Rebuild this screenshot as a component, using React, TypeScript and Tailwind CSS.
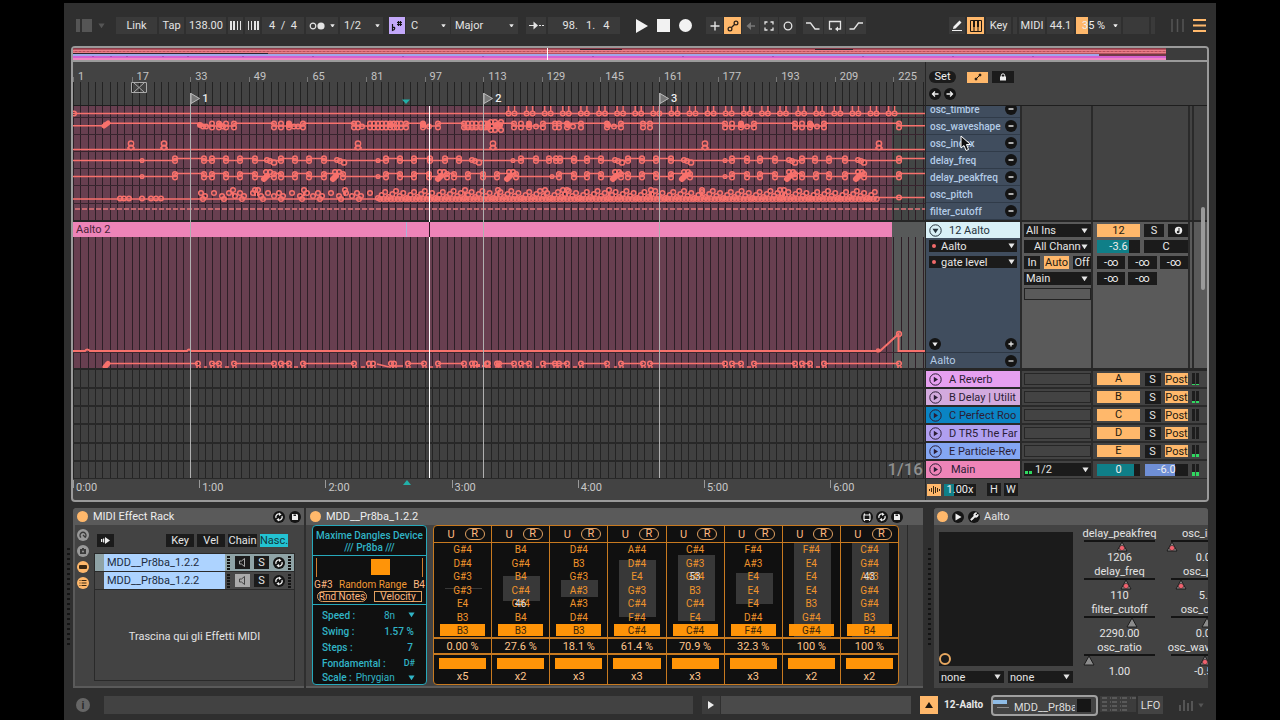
import type { ReactNode } from 'react'
import { Wrench } from 'lucide-react'

const BARS = 232.6
const CLIP_END = 819

const barLabels = [1, 17, 33, 49, 65, 81, 97, 113, 129, 145, 161, 177, 193, 209, 225]
const minutes = ['0:00', '1:00', '2:00', '3:00', '4:00', '5:00', '6:00']
const locators = [
  { bar: 33, name: '1' },
  { bar: 113, name: '2' },
  { bar: 161, name: '3' },
]
const params = ['osc_timbre', 'osc_waveshape', 'osc_index', 'delay_freq', 'delay_peakfreq', 'osc_pitch', 'filter_cutoff']

const returns = [
  { id: 'A', name: 'A Reverb', color: 'bg-[#e6a0f0]', level: 1 },
  { id: 'B', name: 'B Delay | Utilit', color: 'bg-[#d3aade]', level: 2 },
  { id: 'C', name: 'C Perfect Roo', color: 'bg-[#0a84c4]', level: 0 },
  { id: 'D', name: 'D TR5 The Far', color: 'bg-[#b09ff0]', level: 0 },
  { id: 'E', name: 'E Particle-Rev', color: 'bg-[#84a6f2]', level: 3 },
]

const voices = [
  { notes: ['G#4', 'D#4', 'G#3', 'G#3', 'E4', 'B3'], root: 'B3', chance: '0.00 %', repeat: 'x5', top: 45, height: 1 },
  { notes: ['B4', 'G#4', 'B4', 'C#4', 'G#4', 'B4'], root: 'B3', chance: '27.6 %', repeat: 'x2', top: 33, height: 25, ghost: '46', ghostRow: 4 },
  { notes: ['D#4', 'B3', 'G#3', 'A#3', 'A#3', 'D#4'], root: 'B3', chance: '18.1 %', repeat: 'x3', top: 37, height: 17 },
  { notes: ['A#4', 'D#4', 'E4', 'G#3', 'C#4', 'F#4'], root: 'C#4', chance: '61.4 %', repeat: 'x3', top: 17, height: 57 },
  { notes: ['C#4', 'G#3', 'G#4', 'B3', 'C#4', 'E4'], root: 'C#4', chance: '70.9 %', repeat: 'x3', top: 12, height: 66, ghost: '53', ghostRow: 2 },
  { notes: ['F#4', 'A#3', 'E4', 'E4', 'E4', 'D#4'], root: 'F#4', chance: '32.3 %', repeat: 'x3', top: 30, height: 31 },
  { notes: ['F#4', 'E4', 'E4', 'E4', 'B3', 'G#4'], root: 'G#4', chance: '100 %', repeat: 'x2', top: 0, height: 94 },
  { notes: ['C#4', 'G#4', 'A#3', 'G#4', 'G#4', 'B3'], root: 'B4', chance: '100 %', repeat: 'x2', top: 0, height: 94, ghost: '43', ghostRow: 2 },
]

const sliders = [
  { name: 'delay_peakfreq', value: '1206', at: 38, mapped: true },
  { name: 'delay_freq', value: '110', at: 42, mapped: true },
  { name: 'filter_cutoff', value: '2290.00', at: 48, mapped: false },
  { name: 'osc_ratio', value: '1.00', at: 5, mapped: false },
]
const slidersMore = [
  { name: 'osc_index', value: '0.00', at: 1, mapped: true },
  { name: 'osc_pitch', value: '5.0', at: 10, mapped: true },
  { name: 'osc_offset', value: '0.00', at: 36, mapped: false },
  { name: 'osc_waveshape', value: '-0.50', at: 34, mapped: true },
]

// automation breakpoints, x in timeline units
const shapePairs = [139, 146, 153, 161, 201, 208, 216, 230, 281, 285, 297, 301, 305, 309, 313, 317, 321, 324, 328, 333, 350, 365, 391, 395, 399, 403, 408, 412, 415, 441, 448, 456, 470, 482, 486, 494, 508, 534, 548, 570, 577, 652, 659, 668, 681, 722, 729, 737, 751, 826]
const shapeLows = [130, 133, 150, 221, 225, 289, 356, 419, 463, 500, 541, 674, 744]
const shapeBlobs = [127, 147, 216, 318, 350, 415, 423, 427, 456, 495, 535, 668, 738]
const indexSpikes = [58, 91, 285, 420, 632, 806]
const freqPairs = [102, 131, 139, 153, 167, 182, 208, 222, 236, 251, 313, 327, 341, 357, 372, 386, 448, 463, 476, 483, 487, 501, 514, 528, 555, 569, 583, 598, 659, 674, 687, 702, 729, 742, 756, 772, 826]
const freqLows = [[197, 201], [267, 271], [402, 406], [545, 549], [614, 618], [719, 722], [788, 791]]
const freqDots = [69, 305, 440, 652]
const peakPairs = [102, 131, 139, 153, 167, 182, 201, 208, 222, 236, 251, 270, 313, 327, 341, 356, 374, 381, 395, 410, 424, 443, 486, 501, 514, 528, 548, 555, 569, 583, 598, 617, 659, 674, 687, 702, 722, 729, 743, 756, 772, 791, 826]
const peakBlobs = [193, 262, 367, 436, 542, 611, 716, 785]
const peakDots = [69, 305, 479, 652]
const pitchDots = [47, 51, 56, 69, 78, 83, 88]
const pitchPeaks = [160, 182, 185, 231, 272, 392, 425, 472, 490, 494, 536, 578, 629, 707, 711]
const pins = [125, 139, 146, 161, 201, 208, 216, 230, 281, 296, 300, 318, 321, 335, 351, 365, 391, 399, 402, 414, 415, 424, 426, 441, 448, 456, 470, 482, 486, 494, 508, 534, 548, 570, 577, 652, 659, 668, 681, 722, 729, 737, 751, 826]
const pinRuns = [[32, 125], [139, 146], [161, 201], [208, 216], [230, 281], [335, 351], [365, 391], [426, 441], [448, 456], [470, 494], [508, 534], [548, 570], [577, 652], [659, 668], [681, 722], [729, 737], [751, 826]]
const timbreSpikes = Array.from({ length: 22 }, (_, i) => 435.5 + i * 18.1)

const pitchNodes: number[][] = []
for (let i = 0, x = 128; x < 803; i++) {
  const dense = x > 300
  pitchNodes.push([x, dense ? 85 + ((i * 5) % 8) : 87 + ((i * 3) % 6)])
  if (dense || i % 3 === 0) pitchNodes.push([x + 2, 93])
  x += dense ? 3.6 : 4 + ((i * 5) % 6)
}

function steps(xs: number[], high: number, low: number) {
  let level = low
  let d = `M0 ${low}`
  for (const x of xs) {
    d += `H${x}`
    level = level === low ? high : low
    d += `V${level}`
  }
  return `${d}H852`
}

const panelBtn = 'flex h-[13px] items-center justify-center bg-[#1b1b1b] text-[#e6e6e6]'
const barBtn = 'flex h-[17px] items-center justify-center bg-[#3a3a3a] text-[#e4e4e4]'

function Caret({ className }: { className: string }) {
  return (
    <svg viewBox="0 0 8 6" className={className} aria-hidden="true">
      <path d="M0.5 0.5H7.5L4 6Z" fill="currentColor" />
    </svg>
  )
}

function Select({ label, value, className, arrow, pad }: { label: string; value: string; className: string; arrow: string; pad: string }) {
  return (
    <span className={`relative flex items-center ${className}`}>
      <select aria-label={label} defaultValue={value} className={`h-full w-full appearance-none bg-transparent outline-none ${pad}`}>
        <option>{value}</option>
      </select>
      <Caret className={`pointer-events-none absolute ${arrow}`} />
    </span>
  )
}

function Field({ label, value, className }: { label: string; value: string; className: string }) {
  return <input aria-label={label} defaultValue={value} className={`min-w-0 text-center outline-none ${className}`} />
}

function Round({ label, children, className = '' }: { label: string; children: ReactNode; className?: string }) {
  return (
    <button aria-label={label} className={`flex size-[12px] shrink-0 items-center justify-center rounded-full bg-[#141414] text-[#eee] ${className}`}>
      {children}
    </button>
  )
}

function SwapIcon() {
  return (
    <svg viewBox="0 0 12 12" className="size-[12px]" fill="none" stroke="currentColor" strokeWidth="1.3">
      <path d="M3 7A3 3 0 0 1 7 3.2M9 5A3 3 0 0 1 5 8.8" />
      <path d="M6 1.5L8.6 3.6L6 5ZM6 10.5L3.4 8.4L6 7Z" fill="currentColor" stroke="none" />
    </svg>
  )
}

function SaveIcon() {
  return (
    <svg viewBox="0 0 12 12" className="size-[12px]">
      <path d="M3 3H8L9 4V9H3Z" fill="#eee" />
      <path d="M4.5 3.5H7V5H4.5Z" fill="#222" />
    </svg>
  )
}

function Sign({ plus = false }: { plus?: boolean }) {
  return (
    <svg viewBox="0 0 12 12" className="size-[12px]" stroke="#e0e0e0" strokeWidth="1.3">
      <path d={plus ? 'M3.5 6H8.5M6 3.5V8.5' : 'M3.5 6H8.5'} />
    </svg>
  )
}

function Toolbar() {
  return (
    <header className="flex h-[43px] items-center pt-[2px] pr-[10px] pl-[12px]">
      <button aria-label="Show browser" className="flex items-center gap-[6px] text-[#555]">
        <svg viewBox="0 0 16 13" className="h-[13px] w-[16px]" fill="currentColor"><path d="M0 0H4V13H0ZM6 0H16V13H6Z" /></svg>
        <Caret className="w-[7px]" />
      </button>
      <div className="ml-[11px] flex gap-[2px]">
        <button className={`${barBtn} w-[41px]`}>Link</button>
        <button className={`${barBtn} w-[25px]`}>Tap</button>
        <Field label="Tempo" value="138.00" className="h-[17px] w-[40px] bg-[#3a3a3a] text-[#e4e4e4]" />
        <button aria-label="Nudge down" className={`${barBtn} w-[15px]`}>
          <svg viewBox="0 0 12 9" className="h-[9px] w-[12px]" stroke="currentColor"><path d="M1 0V9M4 0V9" strokeWidth="2" /><path d="M7.5 0V9M10.5 0V9" /></svg>
        </button>
        <button aria-label="Nudge up" className={`${barBtn} w-[15px]`}>
          <svg viewBox="0 0 12 9" className="h-[9px] w-[12px]" stroke="currentColor"><path d="M1.5 0V9M4.5 0V9" /><path d="M8 0V9M11 0V9" strokeWidth="2" /></svg>
        </button>
        <Field label="Time signature" value="4  /  4" className="h-[17px] w-[42px] bg-[#3a3a3a] whitespace-pre text-[#e4e4e4]" />
        <button aria-label="Metronome" className={`${barBtn} w-[32px] gap-[5px]`}>
          <svg viewBox="0 0 16 8" className="h-[8px] w-[16px]"><circle cx="4" cy="4" r="2.8" fill="none" stroke="#e4e4e4" strokeWidth="1.2" /><circle cx="12" cy="4" r="3.6" fill="#e4e4e4" /></svg>
          <Caret className="w-[5px]" />
        </button>
        <Select label="Quantization" value="1/2" className="h-[17px] w-[43px] bg-[#3a3a3a] text-[#e4e4e4]" pad="pl-[4px]" arrow="right-[3px] w-[5px]" />
      </div>
      <div className="ml-[6px] flex gap-px">
        <button aria-label="Scale mode" className="flex h-[17px] w-[16px] items-center justify-center bg-[#c3a8fa]">
          <svg viewBox="0 0 12 12" className="size-[12px]" fill="none" stroke="#151515"><path d="M1.500 4V10.500C4.500 9.500 4.500 6.500 1.500 7.500" strokeWidth="1.200" /><path d="M7.500 1V6M9.500 1V6M6 2.500H11M6 4.500H11" strokeWidth="1.200" /></svg>
        </button>
        <Select label="Root note" value="C" className="h-[17px] w-[44px] bg-[#3a3a3a] text-[#e4e4e4]" pad="pl-[5px]" arrow="right-[4px] w-[5px]" />
        <Select label="Scale name" value="Major" className="h-[17px] w-[67px] bg-[#3a3a3a] text-[#e4e4e4]" pad="pl-[4px]" arrow="right-[4px] w-[5px]" />
      </div>
      <div className="ml-[8px] flex gap-[2px]">
        <button aria-label="Follow" className={`${barBtn} w-[20px]`}>
          <svg viewBox="0 0 15 9" className="h-[9px] w-[15px]"><path d="M0 4.500H6M10 4.500H12M13 4.500H15" stroke="#e4e4e4" /><path d="M4.500 0.500L9 4.500L4.500 8.500Z" fill="#e4e4e4" /></svg>
        </button>
        <Field label="Position" value="98.   1.   4" className="h-[17px] w-[72px] bg-[#3a3a3a] pl-[4px] text-[#e4e4e4]" />
      </div>
      <div className="ml-[16px] flex items-center gap-[9px]">
        <button aria-label="Play"><svg viewBox="0 0 12 14" className="h-[14px] w-[12px]" fill="#f2f2f2"><path d="M0 0L12 7L0 14Z" /></svg></button>
        <button aria-label="Stop" className="size-[13px] bg-[#f2f2f2]" />
        <button aria-label="Record" className="size-[13px] rounded-full bg-[#f2f2f2]" />
      </div>
      <div className="ml-[14px] flex gap-px">
        <button aria-label="Overdub" className={`${barBtn} w-[17px]`}><svg viewBox="0 0 10 10" className="size-[10px]" stroke="#e4e4e4" strokeWidth="1.4"><path d="M5 0.500V9.500M0.500 5H9.500" /></svg></button>
        <button aria-label="Automation arm" className="flex h-[17px] w-[17px] items-center justify-center bg-[#ffb86b]">
          <svg viewBox="0 0 12 12" className="size-[12px]" fill="none" stroke="#2a2018" strokeWidth="1.2"><circle cx="3" cy="9" r="1.900" /><circle cx="9" cy="3" r="1.900" /><path d="M4.500 7.500L7.500 4.500" /></svg>
        </button>
        <button aria-label="Re-enable automation" className={`${barBtn} w-[17px]`}><svg viewBox="0 0 10 8" className="h-[8px] w-[10px]" fill="#777"><path d="M0.500 4L5 0V3.300H9V4.700H5V8Z" /></svg></button>
        <button aria-label="Capture" className={`${barBtn} w-[18px]`}><svg viewBox="0 0 10 10" className="size-[10px]" fill="none" stroke="#e4e4e4" strokeWidth="1.300"><path d="M1 3.500V1H3.500M6.500 1H9V3.500M9 6.500V9H6.500M3.500 9H1V6.500" /></svg></button>
        <button aria-label="Session record" className={`${barBtn} w-[17px]`}><svg viewBox="0 0 10 10" className="size-[10px]"><circle cx="5" cy="5" r="3.800" fill="none" stroke="#e4e4e4" strokeWidth="1.300" /></svg></button>
      </div>
      <div className="ml-[7px] flex gap-px">
        <button aria-label="Punch in" className={`${barBtn} w-[20px]`}><svg viewBox="0 0 14 8" className="h-[8px] w-[14px]" fill="none" stroke="#e4e4e4" strokeWidth="1.300"><path d="M0 1H4.500L9 7H13.500" /></svg></button>
        <button aria-label="Loop" className={`${barBtn} w-[21px]`}><svg viewBox="0 0 14 12" className="h-[12px] w-[14px]" fill="none" stroke="#e4e4e4" strokeWidth="1.300"><path d="M4 9H1.500V1.500H12.500V9H8" /><path d="M10 6.500L7 9L10 11.500Z" fill="#e4e4e4" stroke="none" /></svg></button>
        <button aria-label="Punch out" className={`${barBtn} w-[20px]`}><svg viewBox="0 0 14 8" className="h-[8px] w-[14px]" fill="none" stroke="#e4e4e4" strokeWidth="1.300"><path d="M0.500 7H5L9.500 1H14" /></svg></button>
      </div>
      <div className="ml-auto flex gap-[2px]">
        <button aria-label="Draw mode" className={`${barBtn} w-[16px]`}><svg viewBox="0 0 12 12" className="size-[12px]" fill="#f0f0f0"><path d="M2 9L2.500 6.500L8.500 0.500L10.500 2.500L4.500 8.500ZM1 10H11V11H1Z" /></svg></button>
        <button aria-label="Computer MIDI keyboard" className="flex h-[17px] w-[17px] items-center justify-center bg-[#ffb86b]">
          <svg viewBox="0 0 12 12" className="size-[12px]"><path d="M0.500 0.500H11.500V11.500H0.500Z" fill="#ffb86b" stroke="#201810" /><path d="M4 6V12M8 6V12" stroke="#201810" /><path d="M3 0H5V7H3ZM7 0H9V7H7Z" fill="#201810" /></svg>
        </button>
        <button className={`${barBtn} w-[25px]`}>Key</button>
        <span className="w-[4px] bg-[#3a3a3a]" />
        <button className={`${barBtn} w-[26px]`}>MIDI</button>
        <button className={`${barBtn} w-[27px]`}>44.1</button>
        <button className="flex h-[17px] w-[45px] items-center bg-gradient-to-r from-[#ffb86b] from-27% to-[#3a3a3a] to-27% text-[#eee]">
          <span className="ml-[6px]">35 %</span>
          <Caret className="ml-auto mr-[3px] w-[5px]" />
        </button>
        <span className="w-[26px] bg-[#3a3a3a]" />
        <span className="w-[4px] bg-[#3a3a3a]" />
      </div>
      <button aria-label="Mixer view" className="ml-[16px]"><svg viewBox="0 0 13 13" className="size-[13px]" stroke="#555" strokeWidth="1.500"><path d="M1 0V13M6.500 0V13M12 0V13" /></svg></button>
      <button aria-label="Arrangement view" className="ml-[9px]"><svg viewBox="0 0 13 13" className="size-[13px]" stroke="#ffb86b" strokeWidth="2"><path d="M0 1H13M0 6.500H13M0 12H13" /></svg></button>
    </header>
  )
}

function Overview() {
  return (
    <div className="h-[14px] border-b-2 border-[#9a9a9a] bg-[#3c3c3c]">
      <svg viewBox="0 0 1134 12" preserveAspectRatio="none" className="h-[12px] w-full">
        <path d="M0 0H1093V12H0Z" fill="#b4525e" />
        <path d="M0 0.500H1093" stroke="#8a3c48" />
        <path d="M0 2.500H1093M0 4.500H1093" stroke="#e8808a" />
        <path d="M0 3.500H1093" stroke="#d8606c" strokeDasharray="2 2" />
        <path d="M0 5.500H195M507 1.500H549M742 1.500H780M1026 7H1093" stroke="#2c242c" />
        <path d="M0 7H1026" stroke="#a0a6ea" strokeWidth="2" />
        <path d="M0 9H1093" stroke="#d55fd0" strokeWidth="2" />
        <path d="M0 11H1093" stroke="#f086c2" strokeWidth="2" />
        <path d="M20 8V9M38 8V9M54 8V9M90 8V9M115 8V9M170 8V9M240 8V9M330 8V9M410 8V9M520 8V9M610 8V9M700 8V9M790 8V9M880 8V9M960 8V9" stroke="#8b3d93" />
        <path d="M474.500 0V12" stroke="#fff" />
      </svg>
    </div>
  )
}

function BarGrid({ height, color = '#232323' }: { height: number; color?: string }) {
  const d = Array.from({ length: 117 }, (_, i) => `M${Math.round(i * 7.325) + 0.5} 0V${height}`).join('')
  return <path d={d} stroke={color} />
}

function Node({ x, y, r = 2.3 }: { x: number; y: number; r?: number }) {
  return <circle cx={x} cy={y} r={r} />
}

function Lanes() {
  return (
    <svg viewBox="0 0 852 114" preserveAspectRatio="none" className="h-[114px] w-full bg-[#434645]">
      <path d={`M0 0H${CLIP_END}V114H0Z`} fill="#683f50" />
      <BarGrid height={114} color="#2e1f27" />
      <path d="M0 11.500H852M0 28.500H852M0 45.500H852M0 62.500H852M0 79.500H852M0 97.500H852" stroke="#38242e" />
      <g fill="none" stroke="#f8716c" strokeWidth="1.500">
        <path d="M0 7.500H852" />
        <Node x={1} y={7.5} />
        {timbreSpikes.map((x) => (
          <g key={x}>
            <path d={`M${x} 0V5M${x + 6} 0V5`} />
            <Node x={x} y={7.5} />
            <Node x={x + 6} y={7.5} />
          </g>
        ))}
        <path d="M0 19.700H31V17.300H126V20H161V17.300H201V20H230V17.300H281V20H333V17.300H350V20H365V17.300H391V22H428V17.300H441V20H470V17.300H508V20M482 17.300H534V20H548V17.300H652V20H681V17.300H722V20H751V17.300H826V19.700H852" />
        {shapePairs.map((x) => <g key={x}><Node x={x} y={17.5} /><Node x={x} y={21.5} /></g>)}
        {shapeLows.map((x) => <Node key={x} x={x} y={20.5} />)}
        {[418, 422, 428].map((x) => <g key={x}><Node x={x} y={16} /><Node x={x} y={24} /></g>)}
        <g fill="#f8716c">
          <path d="M31 20L35 17" strokeWidth="5" strokeLinecap="round" />
          {shapeBlobs.map((x) => <Node key={x} x={x} y={19} />)}
        </g>
        <path d="M0 43.500H852" />
        {indexSpikes.map((x) => <g key={x}><path d={`M${x - 3} 43V41M${x + 3} 43V41`} /><Node x={x} y={37.5} r={2.6} /><Node x={x} y={41.5} /></g>)}
        <path d={steps(freqPairs, 52.5, 54.5)} />
        {freqPairs.map((x) => <g key={x}><Node x={x} y={52.3} /><Node x={x} y={55} /></g>)}
        {freqLows.map(([a, b]) => <g key={a}><Node x={a - 3} y={54} /><Node x={a} y={55} /><Node x={b} y={56.5} r={2.6} /></g>)}
        {freqDots.map((x) => <Node key={x} x={x} y={54.5} r={1.8} />)}
        <path d={steps(peakPairs, 67.5, 70.5)} />
        {peakPairs.map((x) => <g key={x}><Node x={x} y={68} /><Node x={x} y={71.5} /></g>)}
        {peakBlobs.map((x) => <g key={x}><Node x={x} y={66} /><Node x={x + 4} y={66} /><path d={`M${x - 2} 73L${x + 1} 70`} strokeWidth="6" strokeLinecap="round" /></g>)}
        {peakDots.map((x) => <Node key={x} x={x} y={70.5} r={1.8} />)}
        <path d="M0 93H803V91.500H852" />
        {pitchDots.map((x) => <Node key={x} x={x} y={92.5} />)}
        {pitchNodes.map(([x, y], i) => <Node key={i} x={x} y={y} />)}
        {pitchPeaks.map((x) => <g key={x}><Node x={x} y={84} /><path d={`M${x} 86V90`} strokeWidth="2" /></g>)}
        <Node x={826} y={91.500} />
        <path d="M2 103H852" strokeDasharray="5 2" strokeWidth="1.500" stroke="#e0777a" />
      </g>
    </svg>
  )
}

function ClipEnvelope() {
  return (
    <svg viewBox="0 0 852 131" preserveAspectRatio="none" className="h-[131px] w-full bg-[#575959]">
      <path d={`M0 0H${CLIP_END}V131H0Z`} fill="#683f50" />
      <BarGrid height={131} color="#2e1f27" />
      <path d="M0 115.500H852" stroke="#3d2831" />
      <g fill="none" stroke="#f8716c" strokeWidth="1.500">
        <path d="M0 114H12Q14 111 17 114H114Q116 111 118 114H807L825.500 97V114H852" strokeWidth="2" />
        <Node x={826} y={97} r={2.400} />
        <Node x={805} y={113.500} r={1.500} />
        {pinRuns.map(([a, b]) => <path key={a} d={`M${a} 126.500H${b}`} />)}
        {pins.map((x) => <g key={x}><Node x={x} y={126.500} /><path d={`M${x - 1} 129V131M${x + 2} 129V131`} /></g>)}
        <path d="M131 130H134M152 130H156M221 130H225M288 130H292M304 127L316 130M318 129H330M357 130H360M463 130H466M500 130H504M541 130H544M674 130H678M743 130H747" />
        <path d="M32 130L35 126.500" strokeWidth="5" strokeLinecap="round" />
        <path d="M405 130V127M411 130V128M425 130V126" strokeWidth="4" />
      </g>
    </svg>
  )
}

function Timeline() {
  const pct = (bar: number) => `${((bar - 1) / BARS) * 100}%`
  return (
    <div className="relative min-w-0 flex-1 overflow-hidden">
      <div className="flex h-[22px] overflow-hidden pt-[8px] text-[#c4c4c4]">
        {barLabels.map((n) => (
          <span key={n} className="flex shrink-0 gap-[4px]" style={{ width: `${(16 / BARS) * 100}%` }}>
            <span className="mt-[7px] h-[5px] w-px bg-[#777]" />
            <span className="leading-[14px]">{n}</span>
          </span>
        ))}
      </div>
      <div className="-mt-[2px] h-[24px] border-b border-[#1e1e1e]">
        <svg viewBox="0 0 852 23" preserveAspectRatio="none" className="h-[23px] w-full">
          <BarGrid height={23} />
          <path d="M58.500 0.500H73.500V10.500H58.500ZM61 1L71 10M71 1L61 10" fill="none" stroke="#aaa" />
          <path d="M329 17.500H337L333 22Z" fill="#22b0a8" />
        </svg>
      </div>
      <Lanes />
      <div className="h-[2px] bg-[#262626]" />
      <div className="flex h-[15px] bg-[#575959]">
        <div className="bg-[#ee84b8] pl-[3px] leading-[15px] text-[#4a2338]" style={{ width: `${(CLIP_END / 852) * 100}%` }}>Aalto 2</div>
      </div>
      <ClipEnvelope />
      <div className="h-[2px] bg-[#262626]" />
      <svg viewBox="0 0 852 108" preserveAspectRatio="none" className="h-[108px] w-full bg-[#404040]">
        <BarGrid height={108} color="#242424" />
        <path d="M0 18H852M0 36H852M0 54H852M0 73H852M0 91H852" stroke="#282828" strokeWidth="2" />
      </svg>
      <div className="flex h-[22px] items-start overflow-hidden border-t border-[#282828] text-[#c8c8c8]">
        {minutes.map((m) => (
          <span key={m} className="flex shrink-0 gap-[2px] pt-[1px]" style={{ width: `${(126.2 / 852) * 100}%` }}>
            <span className="h-[8px] w-px bg-[#999]" />
            <span className="leading-[15px]">{m}</span>
          </span>
        ))}
      </div>
      {locators.map((l) => (
        <div key={l.name} className="absolute top-[31px] bottom-[22px] flex border-l border-[#b0b0b0]" style={{ left: pct(l.bar) }}>
          <svg viewBox="0 0 9 11" className="h-[11px] w-[9px]"><path d="M0 0.500L8.500 5.500L0 10.500Z" fill="#777" stroke="#bbb" /></svg>
          <span className="ml-[2px] h-[12px] leading-[12px] font-medium text-[#eee]">{l.name}</span>
        </div>
      ))}
      <div className="absolute top-[44px] bottom-[22px] w-px bg-white" style={{ left: pct(98.3) }} />
      <div className="absolute top-[160px] h-[15px] w-px bg-[#301522]" style={{ left: pct(98.3) }} />
      <div className="absolute top-[160px] h-[15px] w-px bg-[#a9b4d8]" style={{ left: pct(92) }} />
      <svg viewBox="0 0 8 5" className="absolute bottom-[15px] h-[5px] w-[8px]" style={{ left: pct(91) }}><path d="M0 5L4 0L8 5Z" fill="#22b0a8" /></svg>
      <span className="absolute right-[2px] bottom-[21px] text-[17px] leading-[20px] font-medium text-[#8f8f8f]">1/16</span>
    </div>
  )
}

function Meter({ level }: { level: number }) {
  return (
    <div className="flex h-[12px] items-end gap-px">
      <span className="flex h-full w-[3px] items-end bg-[#1d1d1d]"><span className="w-full bg-[#2fd860]" style={{ height: level }} /></span>
      <span className="flex h-full w-[3px] items-end bg-[#1d1d1d]"><span className="w-full bg-[#2fd860]" style={{ height: level }} /></span>
    </div>
  )
}

function PlayCircle() {
  return <svg viewBox="0 0 13 13" className="size-[13px]"><circle cx="6.500" cy="6.500" r="5.700" fill="none" stroke="#2b1d35" /><path d="M4.800 3.700L9 6.500L4.800 9.300Z" fill="#2b1d35" /></svg>
}

function TrackPanel() {
  const drop = 'h-[13px] bg-[#1b1b1b] text-[#e6e6e6]'
  return (
    <aside className="relative w-[282px] shrink-0 border-l border-[#262626] bg-[#434343]">
      <div className="flex h-[44px] flex-col gap-[5px] border-b border-[#1e1e1e] pt-[9px] pl-[3px]">
        <div className="flex h-[12px] items-center">
          <button className="h-[12px] w-[27px] rounded-full bg-[#1b1b1b] leading-[12px] text-[#eee]">Set</button>
          <button aria-label="Automation mode" className="ml-[11px] flex h-[11px] w-[21px] items-center justify-center bg-[#ffb86b]">
            <svg viewBox="0 0 8 8" className="size-[8px]" fill="#201810" stroke="#201810"><circle cx="2" cy="6" r="1" /><circle cx="6" cy="2" r="1" /><path d="M2 6L6 2" /></svg>
          </button>
          <button aria-label="Lock envelopes" className="ml-[4px] flex h-[12px] w-[22px] items-center justify-center bg-[#1b1b1b]">
            <svg viewBox="0 0 8 8" className="size-[8px]"><path d="M1 3.500H7V7.500H1Z" fill="#eee" /><path d="M2.300 4V2.500A1.700 1.700 0 0 1 5.700 2.500V4" fill="none" stroke="#eee" /></svg>
          </button>
        </div>
        <div className="flex gap-[3px]">
          <Round label="Previous locator"><svg viewBox="0 0 8 8" className="size-[8px]" fill="none" stroke="#eee" strokeWidth="1.300"><path d="M7.500 4H1.500M4 1.500L1.500 4L4 6.500" /></svg></Round>
          <Round label="Next locator"><svg viewBox="0 0 8 8" className="size-[8px]" fill="none" stroke="#eee" strokeWidth="1.300"><path d="M0.500 4H6.500M4 1.500L6.500 4L4 6.500" /></svg></Round>
        </div>
      </div>
      <div className="flex h-[114px]">
        <div className="flex w-[94px] flex-col justify-end overflow-hidden bg-[#404d5e] text-[#b3cbe6]">
          {params.map((p) => (
            <div key={p} className="flex h-[17px] shrink-0 items-center justify-between border-b border-[#303b49] pr-[3px] pl-[4px]">
              <span className="w-0 text-[10px] font-medium whitespace-nowrap">{p}</span>
              <Round label={`Remove ${p} lane`}><Sign /></Round>
            </div>
          ))}
        </div>
        <div className="w-[73px] border-x-2 border-[#2a2a2a]" />
        <div className="w-[97px] border-r-2 border-[#2a2a2a]" />
        <div className="w-[4px] border-r-2 border-[#2a2a2a]" />
      </div>
      <div className="h-[2px] bg-[#262626]" />
      <div className="flex h-[146px] bg-[#5a5a5a]">
        <div className="flex w-[94px] flex-col bg-[#404d5e]">
          <div className="flex h-[16px] items-center gap-[7px] bg-[#d9f0f7] pl-[3px] text-[#25333d]">
            <button aria-label="Fold track"><svg viewBox="0 0 13 13" className="size-[13px]"><circle cx="6.500" cy="6.500" r="5.700" fill="none" stroke="#25333d" /><path d="M3.500 4.800H9.500L6.500 9.300Z" fill="#25333d" /></svg></button>
            12 Aalto
          </div>
          <div className="flex flex-col gap-[4px] px-[3px] pt-[2px]">
            {['Aalto', 'gate level'].map((v) => (
              <div key={v} className="flex h-[12px] items-center bg-[#1b1b1b] pl-[3px]">
                <span className="size-[4px] rounded-full bg-[#f36a6a]" />
                <Select label="Automation target" value={v} className="h-[12px] flex-1 text-[#e6e6e6]" pad="pl-[5px]" arrow="right-[2px] w-[7px]" />
              </div>
            ))}
          </div>
          <div className="mt-auto flex items-center justify-between px-[3px] pb-[2px]">
            <Round label="Lane options"><Caret className="w-[6px]" /></Round>
            <Round label="Add lane"><Sign plus /></Round>
          </div>
          <div className="flex h-[16px] items-center justify-between border-t border-[#2d3744] pr-[3px] pl-[4px] text-[#b3cbe6]">
            Aalto
            <Round label="Remove Aalto lane"><Sign /></Round>
          </div>
        </div>
        <div className="flex w-[73px] flex-col gap-[3px] border-x-2 border-[#2a2a2a] pt-[2px] pl-[2px]">
          <Select label="Input type" value="All Ins" className={drop} pad="pl-[2px]" arrow="right-[3px] w-[7px]" />
          <Select label="Input channel" value="All Channels" className={drop} pad="pl-[10px] pr-[10px]" arrow="right-[3px] w-[7px]" />
          <div className="flex justify-between">
            <button className={`${panelBtn} w-[16px]`}>In</button>
            <button className="flex h-[13px] w-[25px] items-center justify-center bg-[#ffb86b] text-[#241a10]">Auto</button>
            <button className={`${panelBtn} w-[18px]`}>Off</button>
          </div>
          <Select label="Output type" value="Main" className={drop} pad="pl-[2px]" arrow="right-[3px] w-[7px]" />
          <div className="h-[12px] border border-[#222]" />
        </div>
        <div className="flex w-[97px] flex-col gap-[3px] border-r-2 border-[#2a2a2a] pt-[2px] pl-[4px]">
          <div className="flex justify-between">
            <button className="h-[13px] w-[43px] bg-[#ffb86b] leading-[13px] text-[#241a10]">12</button>
            <button className={`${panelBtn} w-[20px]`}>S</button>
            <button aria-label="Arm" className={`${panelBtn} w-[20px]`}><svg viewBox="0 0 9 9" className="size-[9px]"><circle cx="4.500" cy="4.500" r="3.700" fill="#eee" /><path d="M5 2V6.500" stroke="#222" /><circle cx="4" cy="6" r="1.200" fill="#222" /></svg></button>
          </div>
          <div className="flex justify-between">
            <Field label="Volume" value="-3.6" className="h-[13px] w-[43px] bg-gradient-to-r from-[#0f7f88] from-75% to-[#1b1b1b] to-75% text-[#eee]" />
            <Field label="Pan" value="C" className="h-[13px] w-[44px] bg-[#1b1b1b] text-[#eee]" />
          </div>
          <div className="grid grid-cols-3 gap-[3px]">
            {['A', 'B', 'C', 'D', 'E'].map((s) => <Field key={s} label={`Send ${s}`} value="-∞" className="h-[13px] bg-[#1b1b1b] text-[#eee]" />)}
          </div>
        </div>
        <div className="w-[4px] border-r-2 border-[#2a2a2a]" />
      </div>
      <div className="h-[3px] bg-[#262626]" />
      {returns.map((r) => (
        <div key={r.id} className="flex h-[18px] border-b-2 border-[#2a2a2a]">
          <button className={`flex w-[94px] items-center gap-[7px] overflow-hidden pl-[3px] whitespace-nowrap text-[#2b1d35] ${r.color}`}><PlayCircle /><span>{r.name}</span></button>
          <div className="flex w-[73px] items-center border-x-2 border-[#2a2a2a] pl-[2px]"><span className="h-[12px] w-full border border-[#262626]" /></div>
          <div className="flex w-[97px] items-center justify-between pr-[2px] pl-[4px]">
            <button className="h-[12px] w-[43px] bg-[#ffb86b] leading-[12px] text-[#241a10]">{r.id}</button>
            <button className={`${panelBtn} w-[16px]`}>S</button>
            <button className="flex h-[12px] w-[23px] items-center justify-center bg-[#ffb86b] text-[#241a10]">Post</button>
          </div>
          <div className="flex items-center pl-[2px]"><Meter level={r.level} /></div>
        </div>
      ))}
      <div className="flex h-[18px] border-b border-[#2a2a2a]">
        <button className="flex w-[94px] items-center gap-[9px] bg-[#ee84b8] pl-[3px] text-[#2b1d35]"><PlayCircle />Main</button>
        <div className="flex w-[73px] items-center border-x-2 border-[#2a2a2a] pl-[2px]">
          <span className="flex h-[13px] items-center gap-px bg-[#1b1b1b] pl-px"><span className="mt-[5px] size-[3px] bg-[#2fd860]" /><span className="mt-[5px] size-[3px] bg-[#2fd860]" /></span>
          <Select label="Cue out" value="1/2" className="h-[13px] flex-1 bg-[#1b1b1b] text-[#e6e6e6]" pad="pl-[3px]" arrow="right-[2px] w-[7px]" />
        </div>
        <div className="flex w-[97px] items-center justify-between pr-[2px] pl-[4px]">
          <Field label="Main volume" value="0" className="h-[12px] w-[43px] bg-gradient-to-r from-[#0f7f88] from-85% to-[#1b1b1b] to-85% text-[#eee]" />
          <Field label="Cue volume" value="-6.0" className="h-[12px] w-[43px] bg-gradient-to-r from-[#6f8fd6] from-70% to-[#1b1b1b] to-70% text-[#eee]" />
        </div>
        <div className="flex items-center pl-[2px]"><Meter level={4} /></div>
      </div>
      <div className="flex h-[21px] items-center pl-px">
        <button aria-label="Overview waveform" className="flex h-[12px] w-[14px] items-center justify-center bg-[#ffb86b]"><svg viewBox="0 0 11 8" className="h-[8px] w-[11px]" stroke="#3a2813"><path d="M0.500 3V5M2.500 2V6M4.500 0V8M6.500 1V7M8.500 2V6M10.500 3V5" /></svg></button>
        <Field label="Playback speed" value="1.00x" className="ml-[3px] h-[12px] w-[32px] bg-gradient-to-r from-[#0f7f88] from-30% to-[#1b1b1b] to-30% text-[#eee]" />
        <button className={`${panelBtn} ml-[11px] w-[14px]`}>H</button>
        <button className={`${panelBtn} ml-[3px] w-[14px]`}>W</button>
      </div>
      <div className="absolute top-[145px] right-[2px] h-[83px] w-[4px] rounded-full bg-[#9a9a9a]" />
      <svg viewBox="0 0 12 18" className="absolute top-[73px] left-[34px] h-[18px] w-[12px]"><path d="M1 1V13L4 10.500L6 15.500L8.500 14.500L6.500 9.500H10.500Z" fill="#111" stroke="#fff" /></svg>
    </aside>
  )
}

function Grip() {
  return <div className="h-[100px] w-[3px] self-center bg-[repeating-linear-gradient(to_bottom,#141414_0_2px,transparent_2px_5px)]" />
}

function Rack() {
  return (
    <section className="flex w-[231px] shrink-0 flex-col rounded-tl-[3px] border-b-2 border-l-2 border-[#5a5a5a] bg-[#434343]">
      <div className="flex h-[17px] items-center bg-[#5a5a5a] pr-[3px] pl-[2px] text-[#eee]">
        <button aria-label="Device on" className="mr-[5px] size-[11px] rounded-full bg-[#ffb86b]" />
        <h2>MIDI Effect Rack</h2>
        <span className="ml-auto flex gap-[4px]"><Round label="Hot swap"><SwapIcon /></Round><Round label="Save preset"><SaveIcon /></Round></span>
      </div>
      <div className="flex flex-1 pr-[9px] pb-[5px]">
        <div className="flex w-[19px] flex-col items-center gap-[4px] pt-[4px] pr-[3px]">
          <button aria-label="Macros" className="flex size-[12px] items-center justify-center rounded-full bg-[#999]"><svg viewBox="0 0 8 8" className="size-[8px]" fill="none" stroke="#3a3a3a" strokeWidth="1.300"><path d="M2 6.500A3 3 0 1 1 6 6.500M4 4L6.500 6.500" /></svg></button>
          <button aria-label="Snapshots" className="flex size-[12px] items-center justify-center rounded-full bg-[#999]"><svg viewBox="0 0 8 8" className="size-[8px]"><path d="M1 2H7V7H1ZM3 1H5V2H3Z" fill="#3a3a3a" /><circle cx="4" cy="4.500" r="1" fill="#999" /></svg></button>
          <button aria-label="Devices" className="flex size-[12px] items-center justify-center rounded-full bg-[#ffb86b]"><span className="h-[4px] w-[8px] rounded-[1px] bg-[#3a2813]" /></button>
          <button aria-label="Chain list" className="flex size-[12px] items-center justify-center rounded-full bg-[#ffb86b]"><svg viewBox="0 0 8 8" className="size-[8px]" stroke="#3a2813"><path d="M0.500 1.500H1.500M0.500 4H1.500M0.500 6.500H1.500M2.500 1.500H7.500M2.500 4H7.500M2.500 6.500H7.500" /></svg></button>
        </div>
        <div className="flex min-w-0 flex-1 flex-col">
          <div className="flex h-[28px] items-center gap-[3px] pt-[3px] pr-[7px] pl-[3px]">
            <button aria-label="Auto select" className={`${panelBtn} mr-auto w-[17px]`}><svg viewBox="0 0 9 7" className="h-[7px] w-[9px]" fill="#eee"><path d="M0 2H1.300V5H0ZM2 1.500H3.300V5.500H2ZM4 0L9 3.500L4 7Z" /></svg></button>
            <button className={`${panelBtn} w-[28px]`}>Key</button>
            <button className={`${panelBtn} w-[28px]`}>Vel</button>
            <button className={`${panelBtn} w-[29px]`}>Chain</button>
            <button className="flex h-[13px] w-[28px] items-center justify-center bg-[#23c3d3] text-[#12363b]">Nasc.</button>
          </div>
          <div className="flex flex-1 flex-col border border-[#2a2a2a]">
            {[0, 1].map((i) => (
              <div key={i} className={`flex h-[18px] items-center border-b border-[#2a2a2a] ${i === 0 ? 'bg-[#8fa3a6]' : 'bg-[#484848]'}`}>
                <span className="ml-[9px] h-full w-[121px] bg-[#add3ff] pl-[3px] leading-[17px] text-[#1c2c3e]">MDD__Pr8ba_1.2.2</span>
                <span className="mx-[2px] h-[14px] w-[3px] bg-[repeating-linear-gradient(to_bottom,#141414_0_2px,transparent_2px_3px)]" />
                <button aria-label="Chain activator" className={`ml-[3px] flex h-[13px] w-[15px] items-center justify-center ${i === 0 ? 'bg-[#1b1b1b] text-[#aaa]' : 'bg-[#aaa] text-[#444]'}`}><svg viewBox="0 0 9 9" className="size-[9px]" fill="none" stroke="currentColor"><path d="M1.500 3H3.500L6.500 0.500V8.500L3.500 6H1.500Z" /></svg></button>
                <button className={`${panelBtn} ml-[4px] w-[15px]`}>S</button>
                <Round label="Swap chain" className="ml-[4px]"><SwapIcon /></Round>
                <span className="ml-auto mr-[3px] h-[14px] w-[3px] bg-[repeating-linear-gradient(to_bottom,#141414_0_2px,transparent_2px_3px)]" />
              </div>
            ))}
            <p className="flex flex-1 items-center justify-center pt-[2px] text-[#e2e2e2]">Trascina qui gli Effetti MIDI</p>
          </div>
        </div>
      </div>
    </section>
  )
}

function ProbaPanel() {
  const row = 'flex h-[16px] items-center justify-between'
  return (
    <div className="flex w-[115px] flex-col rounded-[4px] border border-[#27a9bb] bg-[#101010] text-[#30b4c6]">
      <div className="h-[30px] border-b border-[#27a9bb] pt-[4px] text-center text-[10px] leading-[12px] font-medium whitespace-nowrap">Maxime Dangles Device<br />/// Pr8ba ///</div>
      <div className="h-[49px] border-b border-[#27a9bb] px-[3px] pt-[2px] text-[#ffb880]">
        <div className="flex h-[19px] items-start border-x border-[#d08030] pl-[54px]"><span className="mt-[1px] h-[16px] w-[19px] bg-[#ff9408]" /></div>
        <div className="-mx-[2px] flex justify-between pt-px text-[10px] leading-[13px]"><span>G#3</span><span className="text-[#f29a35]">Random Range</span><span>B4</span></div>
        <div className="flex justify-between px-[1px] text-[10px]">
          <button className="h-[11px] w-[50px] rounded-full border border-[#e0a060] leading-[9px] whitespace-nowrap">Rnd Notes</button>
          <button className="h-[11px] w-[48px] border border-[#e0a060] leading-[9px]">Velocity</button>
        </div>
      </div>
      <div className="flex flex-1 flex-col justify-between pt-[2px] pr-[11px] pl-[9px] text-[10px] font-medium">
        <div className={row}>Speed :<Select label="Speed" value="8n" className="h-[13px] w-[31px] font-normal" pad="pl-0" arrow="right-0 w-[7px]" /></div>
        <div className={row}>Swing :<Field label="Swing" value="1.57 %" className="w-[32px]" /></div>
        <div className={row}>Steps :<Field label="Steps" value="7" className="w-[10px]" /></div>
        <div className={row}>Fondamental :<span className="text-[9px]">D#</span></div>
        <div className="flex h-[13px] items-center gap-[4px]">Scale :<Select label="Scale" value="Phrygian" className="h-[13px] flex-1 font-normal" pad="pl-0" arrow="right-0 w-[7px]" /></div>
      </div>
    </div>
  )
}

function VoiceColumn({ voice }: { voice: (typeof voices)[number] }) {
  return (
    <div className="flex flex-1 flex-col border-r border-[#c87a20] text-center text-[#f0942c] last:border-r-0">
      <div className="flex h-[17px] items-center justify-center gap-[10px] border-b border-[#c87a20] pl-[7px] text-[#ffb880]">
        <button>U</button>
        <button className="h-[12px] w-[20px] rounded-full border border-[#e0a060] leading-[10px]">R</button>
      </div>
      <div className="relative flex h-[96px] flex-col border-b-2 border-[#c87a20]">
        <span className="absolute left-[11px] w-[37px] bg-[#383838]" style={{ top: voice.top, height: voice.height }} />
        <div className="relative flex h-[81px] flex-col">
          {voice.notes.map((n, i) => (
            <span key={i} className="relative flex-1 text-[10px] leading-[13px]">
              {n}
              {voice.ghostRow === i && <span className="absolute inset-x-0 top-0 text-[#ddd]">{voice.ghost}</span>}
            </span>
          ))}
        </div>
        <button className="relative mx-[6px] h-[12px] bg-[#ff9408] text-[10px] leading-[13px] text-[#3a2408]">{voice.root}</button>
      </div>
      <div className="flex h-[16px] items-center justify-center border-b-2 border-[#c87a20]">
        <Field label="Chance" value={voice.chance} className="w-[50px] text-[#ffc58c]" />
      </div>
      <div className="mx-[5px] mt-[3px] h-[11px] bg-[#ff9408]" />
      <span className="mt-[1px] text-[#ffc58c]">{voice.repeat}</span>
    </div>
  )
}

function Proba() {
  return (
    <section className="ml-[2px] flex w-[617px] shrink-0 flex-col border-b-2 border-[#5a5a5a] bg-[#434343]">
      <div className="flex h-[17px] items-center bg-[#5a5a5a] pl-[4px] text-[#eee]">
        <button aria-label="Device on" className="mr-[5px] size-[11px] rounded-full bg-[#ffb86b]" />
        <h2>MDD__Pr8ba_1.2.2</h2>
        <span className="mr-[20px] ml-auto flex gap-[3px]">
          <Round label="Edit"><svg viewBox="0 0 10 10" className="size-[10px]" fill="none" stroke="#eee" strokeWidth="1.200"><path d="M2 3H8V7.500H2ZM2.500 1.500V3M7.500 1.500V3M2.500 7.500V9M7.500 7.500V9" /></svg></Round>
          <Round label="Hot swap"><SwapIcon /></Round>
          <Round label="Save preset"><SaveIcon /></Round>
        </span>
      </div>
      <div className="flex flex-1 gap-[6px] pb-px pl-[6px]">
        <ProbaPanel />
        <div className="flex w-[466px] rounded-[4px] border border-[#c87a20] bg-[#101010]">
          {voices.map((v, i) => <VoiceColumn key={i} voice={v} />)}
        </div>
        <div className="ml-[2px] border-l border-[#2a2a2a]" />
      </div>
    </section>
  )
}

function ParamSlider({ s }: { s: (typeof sliders)[number] }) {
  return (
    <label className="relative flex h-[38px] w-[71px] shrink-0 flex-col items-center">
      <span className="leading-[13px] whitespace-nowrap">{s.name}</span>
      <input type="range" aria-label={s.name} defaultValue={s.at} className="absolute inset-x-0 top-[12px] h-[10px] w-full appearance-none opacity-0" />
      <svg viewBox="0 0 71 11" className="h-[11px] w-full overflow-visible">
        <path d="M0 1H71" stroke="#141414" strokeWidth="2" />
        <path d={`M${s.at} 2L${s.at + 5} 11H${s.at - 5}Z`} fill="#8c8c8c" stroke="#1c1c1c" />
        {s.mapped && <circle cx={s.at} cy="8" r="2.600" fill="#f0626e" stroke="#222" strokeWidth="0.600" />}
      </svg>
      <span className="leading-[13px]">{s.value}</span>
    </label>
  )
}

function Aalto() {
  return (
    <section className="ml-[3px] flex min-w-0 flex-1 flex-col overflow-hidden rounded-t-[3px] bg-[#434343] text-[#e4e4e4]">
      <div className="flex h-[17px] items-center gap-[4px] bg-[#5a5a5a] pl-[3px]">
        <button aria-label="Device on" className="size-[11px] rounded-full bg-[#ffb86b]" />
        <Round label="Unfold"><svg viewBox="0 0 8 8" className="size-[8px]" fill="#eee"><path d="M1.500 0.500L7.500 4L1.500 7.500Z" /></svg></Round>
        <Round label="Plug-in window"><Wrench className="size-[9px]" fill="currentColor" /></Round>
        <h2>Aalto</h2>
      </div>
      <div className="flex flex-1 pt-[2px]">
        <div className="ml-[5px] w-[134px] shrink-0 pt-[5px]">
          <div className="flex h-[134px] items-end bg-[#1b1b1b] pb-px"><span className="size-[12px] rounded-full border-2 border-[#e8a860]" /></div>
          <div className="mt-[5px] flex justify-between">
            <Select label="X axis" value="none" className="h-[12px] w-[65px] bg-[#1b1b1b]" pad="pl-[2px]" arrow="right-[3px] w-[7px]" />
            <Select label="Y axis" value="none" className="h-[12px] w-[65px] bg-[#1b1b1b]" pad="pl-[2px]" arrow="right-[3px] w-[7px]" />
          </div>
        </div>
        <div className="ml-[11px] flex min-w-0 gap-[16px]">
          <div>{sliders.map((s) => <ParamSlider key={s.name} s={s} />)}</div>
          <div>{slidersMore.map((s) => <ParamSlider key={s.name} s={s} />)}</div>
        </div>
      </div>
    </section>
  )
}

function StatusBar() {
  return (
    <footer className="flex h-[32px] items-start overflow-hidden pt-[8px] pr-[12px] pl-[12px]">
      <button aria-label="Info" className="mt-[2px] flex size-[14px] items-center justify-center rounded-full bg-[#666] font-bold text-[#2c2c2c]">i</button>
      <div className="ml-[14px] h-[18px] flex-1 bg-[#424242]" />
      <button aria-label="Clip view" className="ml-[9px] flex h-[18px] w-[18px] items-center justify-center bg-[#3c3c3c]"><svg viewBox="0 0 6 8" className="h-[8px] w-[6px]" fill="#eee"><path d="M0 0L6 4L0 8Z" /></svg></button>
      <div className="ml-px h-[18px] w-[190px] bg-[#4a4a4a]" />
      <button aria-label="Device view" className="ml-[9px] flex h-[18px] w-[18px] items-center justify-center bg-[#ffb86b]"><svg viewBox="0 0 8 6" className="h-[6px] w-[8px]"><path d="M0 6L4 0L8 6Z" fill="#201810" /></svg></button>
      <strong className="ml-[6px] w-[47px] text-[10px] leading-[18px] font-bold whitespace-nowrap text-[#e8e8e8]">12-Aalto</strong>
      <button className="-mt-px flex h-[21px] w-[107px] shrink-0 items-stretch overflow-hidden rounded-[4px] border-2 border-[#a0a0a0] bg-[#434343] text-[#ddd]">
        <span className="flex w-[21px] shrink-0 flex-col items-start gap-[3px] pt-[3px]"><span className="h-[4px] w-[14px] bg-[#8fbce6]" /><span className="ml-[4px] h-px w-[12px] bg-[#888]" /></span>
        <span className="w-[61px] shrink-0 overflow-hidden pt-[4px] text-left leading-[13px]">MDD__Pr8ba</span>
        <span className="mx-[2px] my-[2px] w-[14px] shrink-0 bg-[#161616]" />
      </button>
      <svg viewBox="0 0 36 16" className="ml-[2px] h-[16px] w-[36px]"><path d="M0 0H36V16H0Z" fill="#3c3c3c" /><path d="M2 2H36M2 6H30M2 10H30M2 14H30" stroke="#777" strokeDasharray="5 3 1 1" /></svg>
      <button className="ml-[2px] h-[18px] w-[25px] bg-[#434343] leading-[20px] text-[#ddd]">LFO</button>
      <svg viewBox="0 0 14 12" className="mt-[3px] ml-[16px] h-[12px] w-[14px]" stroke="#555" strokeWidth="2"><path d="M1 6V12M5 1V12M9 4V12M13 2V12" /></svg>
      <Caret className="mt-[7px] ml-[5px] w-[6px] text-[#555]" />
    </footer>
  )
}

export default function App() {
  return (
    <div className="min-h-screen bg-black px-16 pt-[3px] font-['Roboto','Liberation_Sans',sans-serif] text-[11px] leading-[13px]">
      <div className="bg-[#2f2f2f]">
        <Toolbar />
        <main className="mx-[7px] overflow-hidden rounded-[4px] border-2 border-[#9a9a9a] bg-[#434343]">
          <Overview />
          <div className="flex">
            <Timeline />
            <TrackPanel />
          </div>
        </main>
        <div className="mt-[6px] mr-[8px] ml-[3px] flex h-[180px] gap-[3px]">
          <Grip />
          <div className="flex min-w-0 flex-1">
            <Rack />
            <Proba />
            <div className="ml-[5px] flex"><Grip /></div>
            <Aalto />
          </div>
        </div>
        <StatusBar />
      </div>
    </div>
  )
}
